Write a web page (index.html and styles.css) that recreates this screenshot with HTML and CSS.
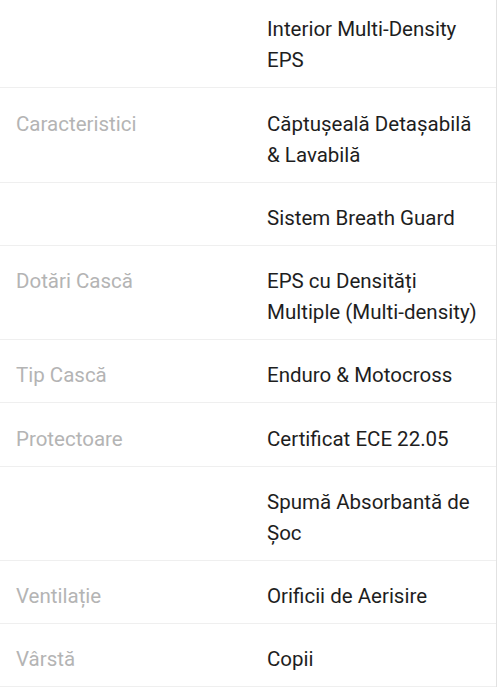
FILE: index.html
```html
<!DOCTYPE html>
<html lang="ro">
<head>
    <meta charset="UTF-8">
    <meta name="viewport" content="width=device-width, initial-scale=1.0">
    <title>Specificații Cască</title>
    <link rel="stylesheet" href="styles.css">
</head>
<body>
    <div class="specs">
        <div class="spec-row">
            <div class="spec-label"></div>
            <div class="spec-value">Interior Multi-Density EPS</div>
        </div>
        <div class="spec-row">
            <div class="spec-label">Caracteristici</div>
            <div class="spec-value">Căptușeală Detașabilă &amp; Lavabilă</div>
        </div>
        <div class="spec-row">
            <div class="spec-label"></div>
            <div class="spec-value">Sistem Breath Guard</div>
        </div>
        <div class="spec-row">
            <div class="spec-label">Dotări Cască</div>
            <div class="spec-value">EPS cu Densități Multiple (Multi-density)</div>
        </div>
        <div class="spec-row">
            <div class="spec-label">Tip Cască</div>
            <div class="spec-value">Enduro &amp; Motocross</div>
        </div>
        <div class="spec-row">
            <div class="spec-label">Protectoare</div>
            <div class="spec-value">Certificat ECE 22.05</div>
        </div>
        <div class="spec-row">
            <div class="spec-label"></div>
            <div class="spec-value">Spumă Absorbantă de Șoc</div>
        </div>
        <div class="spec-row">
            <div class="spec-label">Ventilație</div>
            <div class="spec-value">Orificii de Aerisire</div>
        </div>
        <div class="spec-row">
            <div class="spec-label">Vârstă</div>
            <div class="spec-value">Copii</div>
        </div>
    </div>
</body>
</html>
```

FILE: styles.css
```css
body {
    margin: 0;
    background: #ffffff;
    font-family: Roboto, 'Noto Sans', sans-serif;
    overflow: hidden;
}

.specs {
    margin-top: -6px;
    border-right: 1px solid #e2e2e2;
}

.spec-row {
    display: grid;
    grid-template-columns: 251px 1fr;
    padding: 20.25px 16px 11px 16px;
    border-bottom: 1px solid #efefef;
    font-size: 20.5px;
    line-height: 31px;
}

.spec-label {
    color: #b4b4b4;
}

.spec-value {
    color: #1e1e1e;
}
```
